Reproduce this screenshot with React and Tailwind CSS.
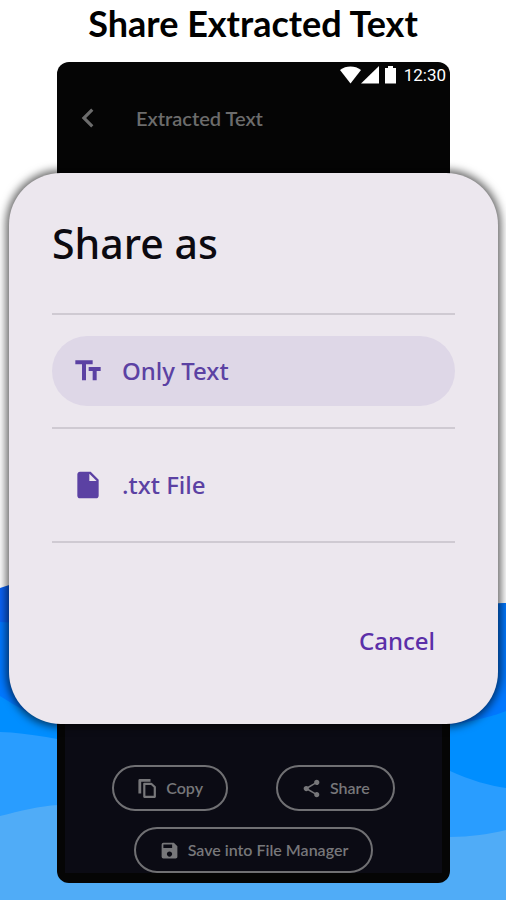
import React from 'react';
import {
  MdChevronLeft,
  MdInsertDriveFile,
  MdSave,
  MdShare,
  MdTextFields,
} from 'react-icons/md';

const Waves = () => (
  <svg
    className="absolute inset-x-0 bottom-0 w-full h-80"
    viewBox="0 0 506 320"
    preserveAspectRatio="none"
    aria-hidden="true"
  >
    <path fill="#0a62f5" d="M0 8C80 -20 180 10 260 40S430 30 506 23V320H0z" />
    <path fill="#0078ff" d="M0 42C60 42 160 90 260 80S430 24 506 23V320H0z" />
    <path fill="#008eff" d="M0 116C30 134 60 156 150 160S440 158 506 131V320H0z" />
    <path fill="#299dff" d="M0 152C30 153 60 159 100 168S400 110 450 191C470 200 490 206 506 208V320H0z" />
    <path fill="#50acf7" d="M0 236C20 231 40 226 58 225C200 210 330 262 450 257C470 257 490 254 506 250V320H0z" />
  </svg>
);

const StatusBar = () => (
  <div className="flex items-center justify-end pr-1 pt-px h-6 text-white">
    <svg className="w-14 h-[18px]" viewBox="0 0 56 18" fill="currentColor" aria-hidden="true">
      <path d="M0 4C6-.6 15-.6 21 4L10.500 17.500z" />
      <path d="M39 0V17.500H21z" />
      <path d="M45 2H48V0h5V2h3V17.500h-11z" />
    </svg>
    <span className="ml-2 font-['Roboto'] text-[17px] leading-6">12:30</span>
  </div>
);

const CopyIcon = ({ className }) => (
  <svg
    className={className}
    viewBox="0 0 21 21"
    fill="none"
    stroke="currentColor"
    strokeWidth="2.2"
    strokeLinejoin="round"
    aria-hidden="true"
  >
    <path d="M2.800 15.500V2.400H13.500" strokeWidth="2.800" />
    <path d="M7.300 5.800H14.200L17.800 9V18.800H7.300z" />
  </svg>
);

const OutlineButton = ({ icon: Icon, children }) => (
  <button
    type="button"
    className="flex items-center gap-2 h-[46px] px-[23px] rounded-full border-2 border-[#707073] text-[#77777a] font-semibold text-base"
  >
    <Icon className="size-[21px]" />
    {children}
  </button>
);

const ShareOption = ({ icon: Icon, selected, children }) => (
  <li className="py-[21px] border-b-2 border-[#cfcad2]">
    <button
      type="button"
      className={`flex items-center gap-[18px] w-full h-[70px] px-5 rounded-full text-2xl font-medium text-[#5b41a3] ${
        selected ? 'bg-[#ded7e7]' : ''
      }`}
    >
      <Icon className="size-8" />
      {children}
    </button>
  </li>
);

const ShareDialog = () => (
  <section
    role="dialog"
    aria-labelledby="share-title"
    className="relative -mx-12 px-[43px] pt-10 pb-[59px] flex flex-col rounded-[52px] bg-[#ece7ee] font-['Noto_Sans',sans-serif] shadow-[0_0_8px_3px_rgba(0,0,0,0.6)]"
  >
    <h2 id="share-title" className="text-[41px] leading-[60px] font-medium text-[#0c0a10]">
      Share as
    </h2>
    <ul className="mt-10 border-t-2 border-[#cfcad2]">
      <ShareOption icon={MdTextFields} selected>Only Text</ShareOption>
      <ShareOption icon={MdInsertDriveFile}>.txt File</ShareOption>
    </ul>
    <div className="flex justify-end pt-[74px] pr-5">
      <button type="button" className="text-2xl leading-[48px] font-medium text-[#5b2fa8]">
        Cancel
      </button>
    </div>
  </section>
);

function App() {
  return (
    <main className="relative min-h-screen overflow-hidden bg-white font-['Lato',sans-serif]">
      <Waves />
      <div className="relative">
        <h1 className="h-[62px] text-center text-[36px] leading-[46px] font-bold text-black">
          Share Extracted Text
        </h1>
        <div className="ml-[57px] mr-14 pb-[10px] rounded-xl bg-[#050505]">
          <StatusBar />
          <header className="flex items-center h-[87px] pb-6 pl-3 gap-[29px] text-[#6c6c6c]">
            <button type="button" aria-label="Back">
              <MdChevronLeft className="size-[38px]" />
            </button>
            <h2 className="text-xl font-semibold">Extracted Text</h2>
          </header>
          <ShareDialog />
          <div className="mx-2 pt-[41px] flex flex-col items-center gap-4 bg-[#0b0b14]">
            <div className="flex gap-12">
              <OutlineButton icon={CopyIcon}>Copy</OutlineButton>
              <OutlineButton icon={MdShare}>Share</OutlineButton>
            </div>
            <OutlineButton icon={MdSave}>Save into File Manager</OutlineButton>
          </div>
        </div>
      </div>
    </main>
  );
}

export default App;
